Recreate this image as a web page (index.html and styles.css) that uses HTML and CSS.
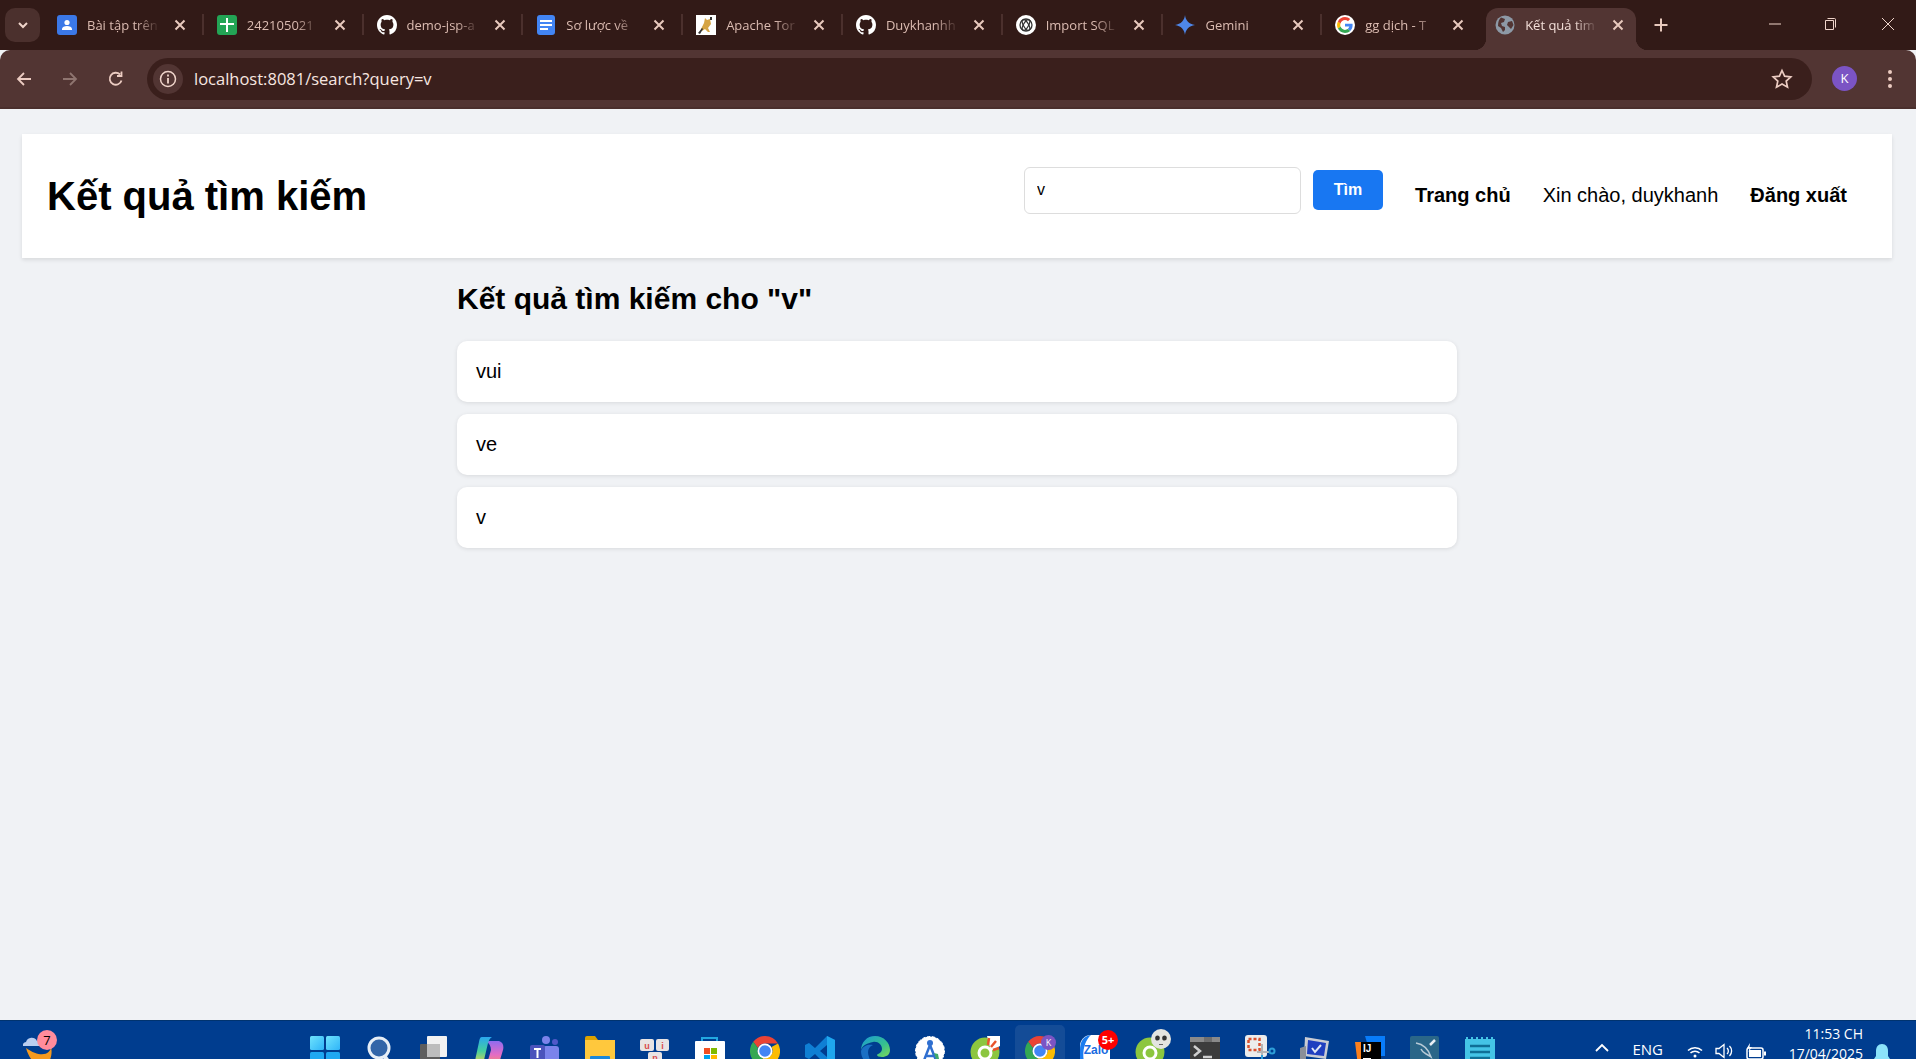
FILE: index.html
```html
<!DOCTYPE html>
<html>
<head>
<meta charset="utf-8">
<title>Kết quả tìm kiếm</title>
<link rel="stylesheet" href="styles.css">
</head>
<body>
<svg class="sprites" width="0" height="0">
  <defs>
    <linearGradient id="edge-top" x1="0" y1="0" x2="1" y2="1"><stop offset="0" stop-color="#1b9ad6"/><stop offset=".6" stop-color="#36c08f"/><stop offset="1" stop-color="#7ed957"/></linearGradient>
    <linearGradient id="copilot-left" x1="0" y1="0" x2="0" y2="1"><stop offset="0" stop-color="#2aa7ef"/><stop offset=".5" stop-color="#45cf9e"/><stop offset="1" stop-color="#f3d34a"/></linearGradient>
    <linearGradient id="copilot-right" x1="0" y1="0" x2="0" y2="1"><stop offset="0" stop-color="#8f6cf0"/><stop offset=".55" stop-color="#e46cc4"/><stop offset="1" stop-color="#f7955a"/></linearGradient>
    <linearGradient id="start-top" x1="0" y1="0" x2="1" y2="1"><stop offset="0" stop-color="#6fe3fd"/><stop offset="1" stop-color="#2fb4f8"/></linearGradient>
  </defs>
  <symbol id="github" viewBox="0 0 16 16"><path fill="#fff" d="M8 0C3.58 0 0 3.58 0 8c0 3.54 2.29 6.53 5.47 7.59.4.07.55-.17.55-.38 0-.19-.01-.82-.01-1.49-2.01.37-2.53-.49-2.69-.94-.09-.23-.48-.94-.82-1.13-.28-.15-.68-.52-.01-.53.63-.01 1.08.58 1.23.82.72 1.21 1.87.87 2.33.66.07-.52.28-.87.51-1.07-1.78-.2-3.64-.89-3.64-3.95 0-.87.31-1.59.82-2.15-.08-.2-.36-1.02.08-2.12 0 0 .67-.21 2.2.82.64-.18 1.32-.27 2-.27.68 0 1.36.09 2 .27 1.53-1.04 2.2-.82 2.2-.82.44 1.1.16 1.92.08 2.12.51.56.82 1.27.82 2.15 0 3.07-1.87 3.75-3.65 3.95.29.25.54.73.54 1.48 0 1.07-.01 1.93-.01 2.2 0 .21.15.46.55.38A8.013 8.013 0 0016 8c0-4.42-3.58-8-8-8z"/></symbol>
  <symbol id="close" viewBox="0 0 16 16"><path fill="none" stroke="#e8c9bd" stroke-width="2" d="M3.5 3.5l9 9M12.500 3.500l-9 9"/></symbol>
  <symbol id="chrome" viewBox="0 0 30 30">
    <path fill="#ea4335" d="M15 0a15 15 0 0 1 13 7.500H15a7.500 7.500 0 0 0-7 4.600L3.200 5.800A15 15 0 0 1 15 0z"/>
    <path fill="#34a853" d="M3.200 5.800L8 12.100a7.500 7.500 0 0 0 5 9.900L9.400 29A15 15 0 0 1 3.200 5.800z"/>
    <path fill="#fbbc04" d="M28 7.500A15 15 0 0 1 9.400 29l3.600-7a7.500 7.500 0 0 0 8.500-11z"/>
    <circle cx="15" cy="15" r="7.500" fill="#fff"/><circle cx="15" cy="15" r="5.800" fill="#4285f4"/>
  </symbol>
  <symbol id="coccoc" viewBox="0 0 30 30">
    <circle cx="15" cy="16" r="14.500" fill="#8cc63f"/>
    <circle cx="15" cy="17" r="6" fill="none" stroke="#fff" stroke-width="3"/>
    <circle cx="15" cy="17" r="3" fill="#8cc63f"/>
  </symbol>
</svg>

<div class="tabstrip">
  <button class="tab-search">
    <svg width="14" height="14" viewBox="0 0 14 14"><path fill="none" stroke="#f0d5cb" stroke-width="2" d="M3 5l4 4 4-4"/></svg>
  </button>

  <div class="tab">
    <svg class="favicon" viewBox="0 0 20 20"><rect width="20" height="20" rx="3" fill="#3b78e7"/><circle cx="10" cy="7.500" r="2.600" fill="#fff"/><path fill="#fff" d="M5 14c0-2 2.500-3 5-3s5 1 5 3v1H5z"/></svg>
    <span class="tab-title">Bài tập trên</span>
    <svg class="tab-close"><use href="#close"/></svg>
  </div>
  <i class="tab-sep"></i>
  <div class="tab">
    <svg class="favicon" viewBox="0 0 20 20"><rect width="20" height="20" rx="3" fill="#23a455"/><path fill="#fff" d="M9 3h2v5h6v2h-6v7H9v-7H3V8h6z"/></svg>
    <span class="tab-title">242105021</span>
    <svg class="tab-close"><use href="#close"/></svg>
  </div>
  <i class="tab-sep"></i>
  <div class="tab">
    <svg class="favicon"><use href="#github"/></svg>
    <span class="tab-title">demo-jsp-a</span>
    <svg class="tab-close"><use href="#close"/></svg>
  </div>
  <i class="tab-sep"></i>
  <div class="tab">
    <svg class="favicon" viewBox="0 0 20 20"><rect x="1" width="18" height="20" rx="3" fill="#4285f4"/><path fill="#fff" d="M4 5h12v2H4zM4 9h12v2H4zM4 13h8v2H4z"/></svg>
    <span class="tab-title">Sơ lược về</span>
    <svg class="tab-close"><use href="#close"/></svg>
  </div>
  <i class="tab-sep"></i>
  <div class="tab">
    <svg class="favicon" viewBox="0 0 20 20"><rect width="20" height="20" fill="#fff"/><path fill="#d6a545" d="M5 14l3-6 1-5 2 2 3-1 1 5-3 4 2 4h-2l-3-3-3 2z"/><path fill="#333" d="M2 18l4-5 1 1-3 5zM14 2h2v3h-2z"/></svg>
    <span class="tab-title">Apache Tor</span>
    <svg class="tab-close"><use href="#close"/></svg>
  </div>
  <i class="tab-sep"></i>
  <div class="tab">
    <svg class="favicon"><use href="#github"/></svg>
    <span class="tab-title">Duykhanhh</span>
    <svg class="tab-close"><use href="#close"/></svg>
  </div>
  <i class="tab-sep"></i>
  <div class="tab">
    <svg class="favicon" viewBox="0 0 20 20"><circle cx="10" cy="10" r="10" fill="#fff"/><g fill="none" stroke="#333" stroke-width="1.300"><circle cx="10" cy="10" r="6"/><ellipse cx="10" cy="10" rx="6" ry="2.500" transform="rotate(60 10 10)"/><ellipse cx="10" cy="10" rx="6" ry="2.500" transform="rotate(-60 10 10)"/></g></svg>
    <span class="tab-title">Import SQL</span>
    <svg class="tab-close"><use href="#close"/></svg>
  </div>
  <i class="tab-sep"></i>
  <div class="tab">
    <svg class="favicon" viewBox="0 0 20 20"><path fill="#4e86e8" d="M10 0c.6 5.500 4 9.200 10 10-6 .8-9.400 4.500-10 10-.6-5.500-4-9.200-10-10 6-.8 9.400-4.500 10-10z"/></svg>
    <span class="tab-title">Gemini</span>
    <svg class="tab-close"><use href="#close"/></svg>
  </div>
  <i class="tab-sep"></i>
  <div class="tab">
    <svg class="favicon" viewBox="0 0 20 20"><circle cx="10" cy="10" r="10" fill="#fff"/><path fill="#4285f4" d="M17.600 10.200c0-.6 0-1-.1-1.500H10v2.900h4.300c-.2 1-.8 1.800-1.600 2.400l2.500 1.900c1.500-1.400 2.400-3.400 2.400-5.700z"/><path fill="#34a853" d="M10 18c2.200 0 4-.7 5.200-2l-2.500-1.900c-.7.500-1.600.8-2.700.8-2.100 0-3.800-1.400-4.500-3.300L2.900 13.600C4.200 16.200 6.900 18 10 18z"/><path fill="#fbbc04" d="M5.500 11.600c-.4-1-.4-2.200 0-3.200L2.900 6.400c-1.100 2.200-1.100 5 0 7.200z"/><path fill="#ea4335" d="M10 5.100c1.200 0 2.200.4 3 1.200l2.200-2.200C13.900 2.800 12.100 2 10 2 6.900 2 4.200 3.800 2.900 6.400l2.600 2C6.200 6.500 7.900 5.100 10 5.100z"/></svg>
    <span class="tab-title">gg dịch - T</span>
    <svg class="tab-close"><use href="#close"/></svg>
  </div>
  <div class="tab tab-active">
    <svg class="favicon" viewBox="0 0 20 20"><circle cx="10" cy="10" r="9.500" fill="#8d99a6"/><path fill="#523533" d="M6 2.500l4 1.500-1 3-3 1 1 3 3 1v3l-2 2-2-4-3-2c0-4 1-7 3-8.500zM13 7l4-1 1.500 4-2.500 4-2-2-2-2z"/></svg>
    <span class="tab-title">Kết quả tìm</span>
    <svg class="tab-close"><use href="#close"/></svg>
  </div>
  <svg class="new-tab" width="16" height="16" viewBox="0 0 16 16"><path stroke="#e8c9bd" stroke-width="2" d="M8 1.500v13M1.500 8h13"/></svg>

  <div class="window-controls">
    <svg class="win-min" width="14" height="14" viewBox="0 0 14 14"><path stroke="#f0d5cb" d="M1 7h12"/></svg>
    <svg width="14" height="14" viewBox="0 0 14 14"><path fill="none" stroke="#f0d5cb" d="M2.500 3.500h8v9h-8zM4.500 1.500h7a1 1 0 0 1 1 1v8"/></svg>
    <svg width="14" height="14" viewBox="0 0 14 14"><path stroke="#f0d5cb" d="M1 1l12 12M13 1L1 13"/></svg>
  </div>
</div>

<div class="toolbar">
  <svg class="tool-icon" viewBox="0 0 18 18"><path fill="none" stroke="#ecccc2" stroke-width="1.800" d="M16 9H3M9 3L3 9l6 6"/></svg>
  <svg class="tool-icon" viewBox="0 0 18 18"><path fill="none" stroke="#8f7570" stroke-width="1.800" d="M2 9h13M9 3l6 6-6 6"/></svg>
  <svg class="tool-icon" viewBox="0 0 18 18"><path fill="none" stroke="#ecccc2" stroke-width="1.800" d="M14.500 10.500a6 6 0 1 1-1.500-6M14.500 1.500v4.500H10"/></svg>
  <div class="omnibox">
    <span class="site-info">
      <svg width="18" height="18" viewBox="0 0 18 18"><circle cx="9" cy="9" r="7.500" fill="none" stroke="#f0d5cb" stroke-width="1.500"/><path stroke="#f0d5cb" stroke-width="1.800" d="M9 8v5.500M9 4.500v2"/></svg>
    </span>
    <span class="url">localhost:8081/search?query=v</span>
    <svg class="star" width="22" height="22" viewBox="0 0 22 22"><path fill="none" stroke="#ecccc2" stroke-width="1.700" d="M11 2.500l2.600 5.700 6.200.7-4.600 4.200 1.300 6.100L11 16.100l-5.500 3.100 1.300-6.100-4.600-4.200 6.200-.7z"/></svg>
  </div>
  <span class="avatar">K</span>
  <svg class="menu-dots" width="6" height="20" viewBox="0 0 6 20"><g fill="#ecccc2"><circle cx="3" cy="3" r="2"/><circle cx="3" cy="10" r="2"/><circle cx="3" cy="17" r="2"/></g></svg>
</div>

<div class="page">
  <header class="site-header">
    <h1>Kết quả tìm kiếm</h1>
    <div class="header-right">
      <form class="search-form">
        <input class="search-input" type="text" value="v">
        <button class="search-btn" type="button">Tìm</button>
      </form>
      <nav class="site-nav">
        <a href="#" class="nav-link">Trang chủ</a>
        <span class="nav-user">Xin chào, duykhanh</span>
        <a href="#" class="nav-link">Đăng xuất</a>
      </nav>
    </div>
  </header>

  <div class="results">
    <h2>Kết quả tìm kiếm cho "v"</h2>
    <div class="result-item">vui</div>
    <div class="result-item">ve</div>
    <div class="result-item">v</div>
  </div>
</div>

<div class="taskbar">
  <div class="weather">
    <svg width="34" height="30" viewBox="0 0 34 30"><path fill="#b9cdf0" d="M1 10a3.500 3.500 0 0 1 3-4 6 6 0 0 1 11-1 3 3 0 0 1 2 5z"/><path fill="#f59a1f" d="M29 10c0 9-11 12-25 2 3 11 10 18 16 18 8-1 11-11 9-20z"/></svg>
    <span class="weather-badge">7</span>
  </div>

  <div class="task-icons">
    <svg class="task-icon" viewBox="0 0 30 30"><g fill="url(#start-top)"><rect width="14" height="14" rx="1.500"/><rect x="16" width="14" height="14" rx="1.500"/></g><g fill="#1fa8f2"><rect y="16" width="14" height="14" rx="1.500"/><rect x="16" y="16" width="14" height="14" rx="1.500"/></g></svg>
    <svg class="task-icon" viewBox="0 0 30 30"><circle cx="14" cy="12" r="10" fill="#3265a8" stroke="#e6eef6" stroke-width="3"/><path stroke="#e6eef6" stroke-width="4" d="M20 21l5 7"/></svg>
    <svg class="task-icon" viewBox="0 0 30 30"><rect y="8" width="20" height="20" rx="1" fill="#5d5d5d"/><rect x="7" width="20" height="21" rx="1" fill="#f2f2f2"/><rect x="7" y="8" width="13" height="13" fill="#bdbdbd"/></svg>
    <svg class="task-icon" viewBox="0 0 30 30"><path fill="url(#copilot-right)" d="M11 5h13c4 1 5 5 4 9l-3 10c-1 4-3 6-7 6H8c3-2 5-5 6-9l2-7c0-4-2-7-5-9z"/><path fill="url(#copilot-left)" d="M7 1h10c-2 1-3 3-4 6L9 24c-1 3-3 5-6 5-3-1-3-5-2-9L4 6c.5-3 1-5 3-5z"/></svg>
    <svg class="task-icon" viewBox="0 0 30 30"><circle cx="16" cy="4" r="4" fill="#7b83eb"/><circle cx="25" cy="6" r="3" fill="#5059c9"/><rect x="13" y="10" width="16" height="16" rx="3" fill="#7b83eb"/><rect y="9" width="15" height="16" rx="2" fill="#4b53bc"/><path fill="#fff" d="M4 12h7v2H8.500v8h-2v-8H4z"/></svg>
    <svg class="task-icon" viewBox="0 0 30 30"><path fill="#dba200" d="M0 2a2 2 0 0 1 2-2h8l3 4H0z"/><rect y="4" width="30" height="26" fill="#ffc83d"/><rect x="5" y="20" width="20" height="10" rx="1" fill="#1a87d9"/></svg>
    <svg class="task-icon" viewBox="0 0 30 30"><g fill="#e9e4e4"><rect x="0" y="3" width="14" height="12" rx="2"/><rect x="16" y="3" width="13" height="12" rx="2"/><rect x="8" y="16" width="14" height="13" rx="2"/></g><text x="7" y="13" class="key-text">u</text><text x="22.500" y="13" class="key-text">i</text><text x="15" y="25" class="key-text">n</text></svg>
    <svg class="task-icon" viewBox="0 0 30 30"><path fill="none" stroke="#22a7e0" stroke-width="2" d="M7 5V2h15v3"/><rect y="5" width="30" height="25" rx="1" fill="#fff"/><rect x="9" y="12" width="6" height="6" fill="#f25022"/><rect x="16" y="12" width="6" height="6" fill="#7fba00"/><rect x="9" y="19" width="6" height="6" fill="#00a4ef"/><rect x="16" y="19" width="6" height="6" fill="#ffb900"/></svg>
    <svg class="task-icon"><use href="#chrome"/></svg>
    <svg class="task-icon" viewBox="0 0 30 30"><path fill="#0f7fd4" d="M22 0l8 4v22l-8 4-12-12-6 5-4-2v-12l4-2 6 5z"/><path fill="#1fa7ee" d="M22 0l8 4v22l-8 4z"/><path fill="#003d8f" d="M22 9l-7 6 7 6z"/></svg>
    <svg class="task-icon" viewBox="0 0 30 30"><path fill="url(#edge-top)" d="M1 15C1 6 7 0 15 0c9 0 15 7 15 14 0 5-4 7-8 7-3 0-5-1-5-2s5-2 5-6c0-4-4-8-9-7C7 7 1 10 1 15z"/><path fill="#1a6fc4" d="M1 15c2-6 8-7 12-6-5 2-6 7-4 12 1 4 4 7 7 9-8 0-15-6-15-15z"/></svg>
    <svg class="task-icon" viewBox="0 0 30 30"><circle cx="15" cy="15" r="14.500" fill="#fff" stroke="#fff" stroke-dasharray="3 2"/><path fill="none" stroke="#2f6fd0" stroke-width="2.500" d="M8 27l7-18 7 18M11 20h8"/><circle cx="15" cy="7" r="3" fill="#2f6fd0"/><path fill="#3fa96a" d="M19 17l4 1 1 5-3 0z"/></svg>
    <svg class="task-icon"><use href="#coccoc"/><path fill="#fff" d="M17 0h13v10l-9 5z"/><path stroke="#e8542c" stroke-width="2.500" d="M18 9l1-7M21 11l5-6M23 14l6-2"/></svg>
    <div class="task-active">
      <svg class="task-icon"><use href="#chrome"/></svg>
      <span class="task-avatar">K</span>
    </div>
    <div class="task-badged">
      <svg class="task-icon" viewBox="0 0 30 30"><rect y="-1" width="30" height="34" rx="11" fill="#fff"/><path fill="#1a7cf0" d="M11-1C3 0 0 6 0 14v16h6C1 22 3 6 11-1z"/><text x="16" y="18" class="zalo-text">Zalo</text></svg>
      <span class="zalo-badge">5+</span>
    </div>
    <div class="task-badged">
      <svg class="task-icon"><use href="#coccoc"/></svg>
      <svg class="skull" width="20" height="20" viewBox="0 0 20 20"><circle cx="10" cy="10" r="10" fill="#e4e4e0"/><ellipse cx="6.500" cy="9" rx="2.300" ry="2.600" fill="#333"/><ellipse cx="13.500" cy="9" rx="2.300" ry="2.600" fill="#333"/><path stroke="#666" d="M8 15.500h4"/></svg>
    </div>
    <svg class="task-icon" viewBox="0 0 30 30"><rect y="1" width="30" height="29" rx="1" fill="#3c3c3c"/><rect y="1" width="30" height="5" fill="#8a8a8a"/><rect x="14" y="1" width="8" height="5" fill="#6e6e6e"/><path fill="none" stroke="#cfcfcf" stroke-width="2.500" d="M4 10l6 5-6 5"/><path stroke="#cfcfcf" stroke-width="2.500" d="M13 21h9"/></svg>
    <svg class="task-icon" viewBox="0 0 30 30"><rect x="0" y="-1" width="22" height="22" rx="3" fill="#ececec"/><path fill="none" stroke="#d9502e" stroke-width="2.500" stroke-dasharray="3 2" d="M3.500 3h11v11h-11z"/><path stroke="#b5b5b5" stroke-width="2" d="M17 8v11M12 16h12"/><path stroke="#2d9fd8" stroke-width="2" d="M17 19v11"/><circle cx="27" cy="15" r="2.500" fill="none" stroke="#2d9fd8" stroke-width="2"/></svg>
    <svg class="task-icon" viewBox="0 0 30 30"><path fill="#c9ccd4" d="M5 1l24 4-3 18-22-3z"/><path fill="#1f3fc0" d="M8 4l18 3-2 13-17-2z"/><path fill="none" stroke="#dfe6f5" stroke-width="2" d="M12 12l3 4 6-7"/><path fill="#8a8f98" d="M0 12l6-2v18H0z"/></svg>
    <svg class="task-icon" viewBox="0 0 30 30"><path fill="#fc801d" d="M0 6h9v24H3z"/><path fill="#087cfa" d="M10 0h20v20H16z"/><rect x="6" y="6" width="20" height="24" fill="#000"/><text x="8" y="16" class="ij-text">IJ</text><rect x="8" y="22" width="8" height="2" fill="#fff"/></svg>
    <svg class="task-icon" viewBox="0 0 30 30"><rect width="29" height="30" rx="2" fill="#2a6688"/><path fill="none" stroke="#b7cad6" stroke-width="1.500" d="M6 7c6 1 12 5 15 14-5-4-8-3-10-8"/><path stroke="#e7eef3" stroke-width="2.500" d="M20 9l5-5"/></svg>
    <svg class="task-icon" viewBox="0 0 30 30"><rect y="3" width="30" height="27" fill="#44c4e6"/><path stroke="#44c4e6" stroke-width="2" stroke-dasharray="2 3" d="M1 2h28"/><path stroke="#0f6f96" stroke-width="2.500" d="M5 10h20M5 16h20M5 22h20"/></svg>
  </div>

  <div class="tray">
    <svg width="16" height="10" viewBox="0 0 16 10"><path fill="none" stroke="#fff" stroke-width="1.800" d="M2 8l6-6 6 6"/></svg>
    <span class="lang">ENG</span>
    <svg width="20" height="16" viewBox="0 0 20 16"><g fill="none" stroke="#fff" stroke-width="1.500"><path d="M3 7.500a10 10 0 0 1 14 0M5.500 10a6.500 6.500 0 0 1 9 0"/></g><circle cx="10" cy="13" r="1.500" fill="#fff"/></svg>
    <svg width="20" height="16" viewBox="0 0 20 16"><path fill="none" stroke="#fff" stroke-width="1.300" d="M1 5.500h3l5-4v13l-5-4H1zM12 5a4 4 0 0 1 0 6M14.500 3a7 7 0 0 1 0 10"/></svg>
    <svg width="22" height="18" viewBox="0 0 22 18"><rect x="2" y="5" width="16" height="11" rx="2" fill="none" stroke="#fff" stroke-width="1.500"/><rect x="4" y="7" width="12" height="7" fill="#fff"/><rect x="19" y="8.500" width="2" height="4" fill="#fff"/><path fill="#fff" d="M5 0L2 5h2.500L3.500 9 7 4H4.500z"/></svg>
    <div class="clock">
      <span>11:53 CH</span>
      <span>17/04/2025</span>
    </div>
    <svg width="18" height="22" viewBox="0 0 18 22"><path fill="#8be3fa" d="M9 1c4 0 6 3 6 7v5l2 3H1l2-3V8c0-4 2-7 6-7z"/><path fill="#8be3fa" d="M6.500 18h5a2.500 2.500 0 0 1-5 0z"/></svg>
  </div>
</div>
</body>
</html>
```

FILE: styles.css
```css
* {
  box-sizing: border-box;
}

html, body {
  height: 100%;
}

body {
  margin: 0;
  display: flex;
  flex-direction: column;
  overflow: hidden;
  background-color: #f0f2f5;
  font-family: "Liberation Sans", Arial, sans-serif;
}

.sprites {
  position: absolute;
}

/* browser tabs */
.tabstrip {
  height: 50px;
  flex: none;
  display: flex;
  align-items: flex-end;
  padding-left: 5px;
  background-color: #321a17;
  font-family: "Open Sans", sans-serif;
}
.tab-search {
  width: 35px;
  height: 34px;
  margin: 0 8px 8px 0;
  padding: 0;
  display: flex;
  align-items: center;
  justify-content: center;
  border: 0;
  border-radius: 10px;
  background-color: #4b302d;
}
.tab {
  width: 150px;
  height: 42px;
  flex: none;
  display: flex;
  align-items: center;
  padding: 0 10px 8px 9px;
  position: relative;
  font-size: 13px;
  color: #dcbcb2;
}
.tab-sep {
  width: 2px;
  height: 21px;
  flex: none;
  margin: 0 3.9px 15px;
  background-color: #4b302d;
}
.favicon {
  width: 20px;
  height: 20px;
  flex: none;
}
.tab-title {
  flex: 1;
  min-width: 0;
  margin-left: 10px;
  white-space: nowrap;
  -webkit-mask-image: linear-gradient(to right, #000 62%, transparent 92%);
  mask-image: linear-gradient(to right, #000 62%, transparent 92%);
}
.tab-close {
  width: 16px;
  height: 16px;
  flex: none;
  margin-left: 6px;
}
.tab-active {
  margin-left: 9.9px;
  background-color: #523533;
  border-radius: 12px 12px 0 0;
  color: #f3dfd8;
}
.tab-active:before,
.tab-active:after {
  content: "";
  position: absolute;
  bottom: 0;
  width: 12px;
  height: 12px;
}
.tab-active:before {
  left: -12px;
  background: radial-gradient(circle at 0 0, transparent 12px, #523533 12.500px);
}
.tab-active:after {
  right: -12px;
  background: radial-gradient(circle at 100% 0, transparent 12px, #523533 12.500px);
}
.new-tab {
  flex: none;
  margin: 0 0 17px 17px;
}
.window-controls {
  margin-left: auto;
  padding: 0 21px 19px 0;
  display: flex;
  gap: 44px;
}
.win-min {
  margin-right: -3px;
}

/* address bar */
.toolbar {
  height: 59px;
  flex: none;
  display: flex;
  align-items: center;
  padding-left: 15px;
  background-color: #523533;
  border-radius: 10px 10px 0 0;
  border-bottom: 2px solid #4a2f2d;
}
.tool-icon {
  width: 18px;
  height: 18px;
  flex: none;
  margin-right: 28px;
}
.omnibox {
  width: 1665px;
  height: 42px;
  flex: none;
  margin-left: -6px;
  display: flex;
  align-items: center;
  padding: 0 19px 0 6px;
  background-color: #3a1f1c;
  border-radius: 21px;
}
.site-info {
  width: 30px;
  height: 30px;
  display: flex;
  align-items: center;
  justify-content: center;
  background-color: #523533;
  border-radius: 50%;
}
.url {
  margin-left: 11px;
  font-family: "Open Sans", sans-serif;
  font-size: 16.5px;
  color: #f7e6e0;
}
.star {
  margin-left: auto;
}
.avatar {
  width: 25px;
  height: 25px;
  flex: none;
  margin-left: 20px;
  border-radius: 50%;
  background-color: #7b54c4;
  color: #fff;
  font-family: "Open Sans", sans-serif;
  font-size: 13px;
  line-height: 25px;
  text-align: center;
}
.menu-dots {
  flex: none;
  margin-left: 30px;
}

/* page */
.page {
  flex: 1;
  min-height: 0;
  padding: 25px 24px 0 22px;
  color: #000;
}
.site-header {
  height: 124px;
  display: flex;
  align-items: center;
  justify-content: space-between;
  padding: 0 45px 0 25px;
  background-color: #fff;
  box-shadow: 0 2px 4px rgba(0,0,0,.1);
}
h1 {
  margin: 0;
  font-size: 40px;
  font-weight: bold;
}
.header-right {
  display: flex;
  align-items: center;
}
.search-form {
  display: flex;
  align-items: center;
  gap: 12px;
  margin-bottom: 12px;
}
.search-input {
  width: 277px;
  height: 47px;
  padding: 0 12px;
  border: 1px solid #ddd;
  border-radius: 6px;
  font-family: "Liberation Sans", Arial, sans-serif;
  font-size: 16px;
  color: #000;
}
.search-btn {
  width: 70px;
  height: 40px;
  padding: 0;
  border: 0;
  border-radius: 5px;
  background-color: #1877f2;
  color: #fff;
  font-family: "Liberation Sans", Arial, sans-serif;
  font-size: 16px;
  font-weight: bold;
}
.site-nav {
  display: flex;
  gap: 32px;
  margin: 0 0 2px 32px;
  font-size: 20px;
}
.nav-link {
  color: #000;
  font-weight: bold;
  text-decoration: none;
}
.results {
  width: 1000px;
  margin: 0 auto;
}
h2 {
  margin: 24px 0 25px;
  font-size: 30px;
  line-height: 34px;
  font-weight: bold;
}
.result-item {
  height: 61px;
  margin-bottom: 12px;
  padding: 0 19px;
  display: flex;
  align-items: center;
  background-color: #fff;
  border-radius: 10px;
  box-shadow: 0 1px 4px rgba(0,0,0,.1);
  font-size: 20px;
}

/* windows taskbar */
.taskbar {
  height: 39px;
  flex: none;
  display: flex;
  overflow: hidden;
  padding-top: 15px;
  background-color: #003d8f;
  border-top: 1px solid #00336f;
  font-family: "Open Sans", sans-serif;
  color: #fff;
}
.weather {
  width: 34px;
  height: 30px;
  flex: none;
  margin-left: 22px;
  position: relative;
}
.weather-badge {
  position: absolute;
  top: -6px;
  right: -1px;
  width: 20px;
  height: 20px;
  border-radius: 50%;
  background-color: #ff8c9c;
  color: #000;
  font-size: 13px;
  line-height: 20px;
  text-align: center;
}
.task-icons {
  display: flex;
  gap: 25px;
  margin-left: 254px;
}
.task-icon {
  width: 30px;
  height: 30px;
  flex: none;
  display: block;
  overflow: visible;
}
.task-active {
  width: 30px;
  position: relative;
}
.task-active:before {
  content: "";
  position: absolute;
  top: -11px;
  left: -10px;
  width: 50px;
  height: 50px;
  border-radius: 5px;
  background-color: #ffffff14;
}
.task-active .task-icon {
  position: relative;
}
.task-avatar {
  position: absolute;
  top: -1px;
  right: -1px;
  width: 15px;
  height: 15px;
  border-radius: 50%;
  background-color: #7b54c4;
  font-size: 9px;
  line-height: 15px;
  text-align: center;
}
.task-badged {
  width: 30px;
  position: relative;
}
.zalo-badge {
  position: absolute;
  top: -6px;
  right: -8px;
  width: 20px;
  height: 20px;
  border-radius: 50%;
  background-color: #f00;
  font-size: 11px;
  font-weight: bold;
  line-height: 20px;
  text-align: center;
}
.skull {
  position: absolute;
  top: -7px;
  right: -6px;
}
.zalo-text {
  font-family: "Liberation Sans", sans-serif;
  font-size: 12px;
  font-weight: bold;
  fill: #1a6be0;
  text-anchor: middle;
}
.key-text {
  font-family: "Liberation Sans", sans-serif;
  font-size: 9px;
  font-weight: bold;
  fill: #d84a4a;
  text-anchor: middle;
}
.ij-text {
  font-family: "Liberation Sans", sans-serif;
  font-size: 10px;
  font-weight: bold;
  fill: #fff;
}
.tray {
  margin-left: auto;
  height: 44px;
  margin-top: -14px;
  padding-right: 25px;
  display: flex;
  align-items: flex-start;
  font-size: 14px;
}
.tray > svg {
  flex: none;
  margin-top: 21px;
  margin-left: 10px;
}
.lang {
  margin: 17px 12px 0 22px;
  font-size: 15px;
}
.clock {
  width: 80px;
  margin: 2px 0 0 16px;
  display: flex;
  flex-direction: column;
  align-items: flex-end;
  line-height: 20px;
  white-space: nowrap;
}
```
